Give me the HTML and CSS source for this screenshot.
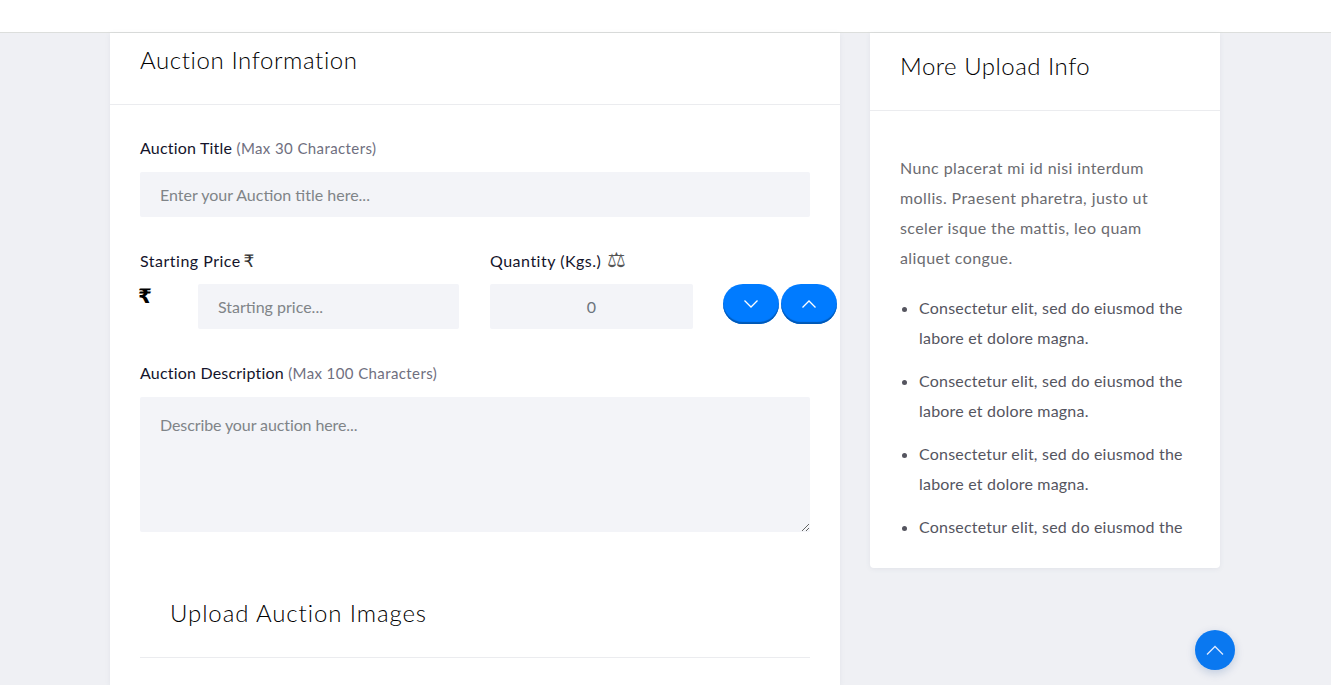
FILE: index.html
```html
<!doctype html>
<html lang="en">
<head>
<meta charset="utf-8">
<meta name="viewport" content="width=device-width, initial-scale=1">
<title>Upload Auction</title>
<link rel="stylesheet" href="styles.css">
</head>
<body>

	<header class="topBar"></header>

	<main class="page">

		<section class="card cardMain">

			<div class="cardHead cardHeadMain">
				<h2 class="cardTitle">Auction Information</h2>
			</div>

			<form class="cardBody">

				<label class="fieldLabel" for="inpTitle">Auction Title <small>(Max 30 Characters)</small></label>
				<input class="field" id="inpTitle" type="text" placeholder="Enter your Auction title here...">

				<div class="priceRow">

					<div class="priceCol">
						<label class="fieldLabel" for="inpPrice">Starting Price <span class="symbol">₹</span></label>
						<div class="priceInput">
							<span class="rupee">₹</span>
							<input class="field" id="inpPrice" type="text" placeholder="Starting price...">
						</div>
					</div>

					<div class="qtyCol">
						<label class="fieldLabel" for="inpQty">Quantity (Kgs.) <span class="symbol symbolScale">⚖</span></label>
						<div class="qtyInput">
							<input class="field fieldQty" id="inpQty" type="text" value="0">
							<div class="qtyButtons">
								<button class="stepBtn" type="button">
									<svg width="16" height="10" viewBox="0 0 16 10"><path d="M1.5 1.5 8 8l6.500-6.500"/></svg>
								</button>
								<button class="stepBtn" type="button">
									<svg width="16" height="10" viewBox="0 0 16 10"><path d="M1.500 8.500 8 2l6.500 6.500"/></svg>
								</button>
							</div>
						</div>
					</div>

				</div>

				<label class="fieldLabel descLabel" for="inpDesc">Auction Description <small>(Max 100 Characters)</small></label>
				<textarea class="field fieldArea" id="inpDesc" placeholder="Describe your auction here..."></textarea>

				<h2 class="cardTitle uploadTitle">Upload Auction Images</h2>

			</form>

		</section>

		<aside class="card cardSide">

			<div class="cardHead cardHeadSide">
				<h2 class="cardTitle">More Upload Info</h2>
			</div>

			<div class="sideBody">
				<p class="sideText">Nunc placerat mi id nisi interdum mollis. Praesent pharetra, justo ut sceler isque the mattis, leo quam aliquet congue.</p>
				<ul class="sideList">
					<li>Consectetur elit, sed do eiusmod the labore et dolore magna.</li>
					<li>Consectetur elit, sed do eiusmod the labore et dolore magna.</li>
					<li>Consectetur elit, sed do eiusmod the labore et dolore magna.</li>
					<li>Consectetur elit, sed do eiusmod the</li>
				</ul>
			</div>

		</aside>

	</main>

	<a class="backTop" href="#">
		<svg width="20" height="12" viewBox="0 0 20 12"><path d="M2 10.500 10 2.500l8 8"/></svg>
	</a>

</body>
</html>
```

FILE: styles.css
```css
html, body { height: 100%; }
body { background: #eff0f4; color: #14142b; font: 16px "Lato", "Noto Sans", sans-serif; margin: 0; overflow: hidden; }

.topBar { background: #fff; border-bottom: 1px solid #dcdedc; height: 32px; }

.page { align-items: flex-start; display: flex; gap: 30px; margin-left: 110px; }

.card { background: #fff; box-shadow: 0 1px 5px rgba(120, 125, 150, .1); }
.cardMain { height: 652px; width: 730px; }
.cardSide { border-radius: 0 0 4px 4px; width: 350px; }

.cardHead { border-bottom: 1px solid #ebecef; box-sizing: border-box; padding: 0 30px; }
.cardHeadMain { height: 72px; padding-top: 13px; }
.cardHeadSide { height: 78px; padding-top: 19px; }
.cardHeadSide .cardTitle { letter-spacing: .5px; }

.cardTitle { color: #000; font-size: 24px; font-weight: 300; letter-spacing: .6px; line-height: 28px; margin: 0; }

.cardBody { display: flow-root; padding: 33px 30px 0; }

.fieldLabel { color: #14142b; display: block; font-size: 16px; letter-spacing: .2px; line-height: 20px; margin-bottom: 14px; }
.fieldLabel small { color: #6f6f80; font-size: 15px; letter-spacing: .4px; }
.symbol { color: #333; font-family: "DejaVu Sans", sans-serif; font-size: 17px; line-height: 0; margin-left: -2px; }
.symbolScale { color: #555; font-size: 21px; margin-left: 1px; }

.field { background: #f3f4f8; border: 0; border-radius: 2px; box-sizing: border-box; color: #6c757d; display: block; font: 16px "Lato", "Noto Sans", sans-serif; height: 45px; padding: 0 20px; width: 100%; }
.field::placeholder { color: #808488; opacity: 1; }

.priceRow { display: flex; gap: 31px; margin-top: 34px; }
.priceRow .fieldLabel { letter-spacing: .5px; margin-bottom: 13px; }
.priceCol { width: 319px; }
.qtyCol { width: 347px; }

.priceInput { display: flex; }
.rupee { color: #000; font-family: "DejaVu Sans", sans-serif; font-size: 20px; font-weight: 700; line-height: 24px; margin-left: -2px; width: 60px; }
.priceInput .field { width: 261px; }

.qtyInput { display: flex; }
.fieldQty { text-align: center; width: 203px; }
.qtyButtons { display: flex; gap: 2px; margin-left: 30px; }

.stepBtn { align-items: center; background: #007bff; border: 0; border-radius: 20px; box-shadow: inset 0 -2px 1px #0058b5; display: flex; height: 40px; justify-content: center; padding: 0; width: 56px; }
.stepBtn svg { fill: none; stroke: #fff; stroke-width: 1.300; }

.descLabel { margin-top: 34px; }
.fieldArea { height: 135px; letter-spacing: -.1px; padding-top: 18px; }

.uploadTitle { border-bottom: 1px solid #ebecef; height: 58px; letter-spacing: .9px; margin-top: 67px; padding-left: 30px; }

.sideBody { padding: 42px 30px 0; }
.sideText { color: #6b6b70; letter-spacing: .4px; line-height: 30px; margin: 0 0 20px; }
.sideList { color: #55555f; letter-spacing: .2px; line-height: 30px; margin: 0; padding: 0 0 26px 19px; }
.sideList li { margin-bottom: 13px; }
.sideList li:last-child { margin-bottom: 0; }

.backTop { align-items: center; background: #0a78f0; border-radius: 50%; bottom: 15px; box-shadow: 0 3px 10px rgba(0, 60, 140, .2); display: flex; height: 40px; justify-content: center; position: fixed; right: 96px; width: 40px; }
.backTop svg { fill: none; stroke: #dfeaff; stroke-width: 1.300; }
```
